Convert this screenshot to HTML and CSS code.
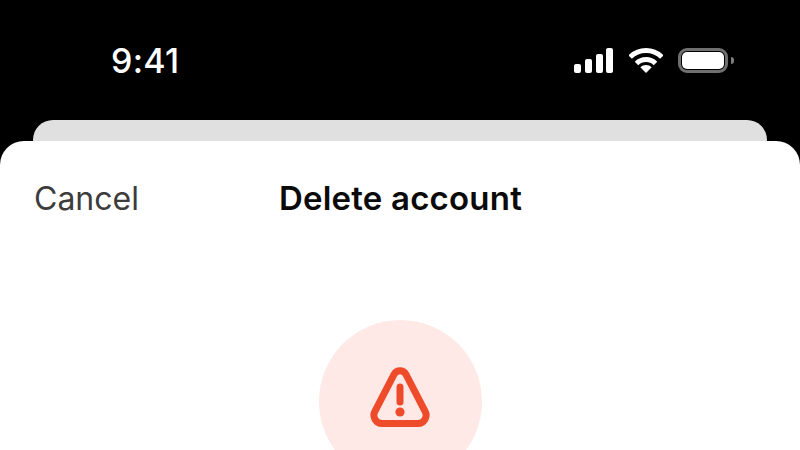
FILE: index.html
```html
<!DOCTYPE html>
<html lang="en">
<head>
  <meta charset="UTF-8" />
  <title>Delete account</title>
  <link rel="stylesheet" href="styles.css">
</head>
<body>
  <div class="status">
    <div class="clock">9:41</div>
    <div class="status-icons">
      <svg class="signal" width="40" height="25" viewBox="0 0 40 25" fill="#fff">
        <rect x="0" y="16" width="7" height="9" rx="2" />
        <rect x="11" y="11" width="7" height="14" rx="2" />
        <rect x="22" y="6" width="7" height="19" rx="2" />
        <rect x="32" y="0" width="7" height="25" rx="2" />
      </svg>
      <svg class="wifi" width="34" height="25" viewBox="0 0 34 25" fill="none" stroke="#fff" stroke-width="5">
        <path d="M1.1 9.1A22.5 22.5 0 0 1 32.9 9.1" />
        <path d="M7.5 15.5A13.5 13.5 0 0 1 26.5 15.5" />
        <path d="M17 25L11.3 19.3A8 8 0 0 1 22.7 19.3Z" fill="#fff" stroke="none" />
      </svg>
      <div class="battery">
        <div class="battery-body"><div class="battery-fill"></div></div>
        <div class="battery-nub"></div>
      </div>
    </div>
  </div>

  <div class="back-card"></div>

  <div class="sheet">
    <div class="nav">
      <div class="cancel">Cancel</div>
      <div class="title">Delete account</div>
    </div>
    <div class="warn-circle">
      <svg width="60" height="60" viewBox="0 0 60 60" fill="none" stroke="#ee4b2b" stroke-width="7" stroke-linecap="round">
        <path d="M24.3 6.9A6.6 6.6 0 0 1 35.7 6.9L55.1 44.4A8.25 8.25 0 0 1 48 56.5H12A8.25 8.25 0 0 1 4.9 44.4Z" stroke-linejoin="round" />
        <path d="M30 20V35" />
        <circle cx="30" cy="45" r="4.6" fill="#ee4b2b" stroke="none" />
      </svg>
    </div>
  </div>
</body>
</html>
```

FILE: styles.css
```css
html, body {
  margin: 0;
  height: 450px;
  overflow: hidden;
  background: #000;
  font-family: 'Inter', 'Liberation Sans', sans-serif;
}
.status {
  height: 120px;
  box-sizing: border-box;
  padding: 0 66px 0 111px;
  display: flex;
  align-items: center;
  justify-content: space-between;
  color: #fff;
}
.clock {
  font-size: 34px;
  font-weight: 500;
  letter-spacing: 0.3px;
}
.status-icons {
  display: flex;
  align-items: center;
  gap: 15px;
}
.signal, .wifi {
  display: block;
}
.battery {
  display: flex;
  align-items: center;
  gap: 3px;
}
.battery-body {
  width: 50px;
  height: 25px;
  box-sizing: border-box;
  border: 3px solid #6f6f6f;
  border-radius: 9px;
  padding: 1px;
}
.battery-fill {
  height: 100%;
  background: #fff;
  border-radius: 5px;
}
.battery-nub {
  width: 3px;
  height: 7px;
  background: #7c7c7c;
  border-radius: 0 3px 3px 0;
}
.back-card {
  height: 21px;
  margin: 0 33px;
  background: #e0e0e0;
  border-radius: 20px 20px 0 0;
}
.sheet {
  height: 309px;
  overflow: hidden;
  background: #fff;
  border-radius: 24px 24px 0 0;
}
.nav {
  height: 114px;
  padding-left: 34px;
  display: grid;
  grid-template-columns: 245px auto;
  align-items: center;
}
.cancel {
  font-size: 32px;
  color: #3c3c3c;
}
.title {
  font-size: 33px;
  font-weight: 600;
  letter-spacing: 0.2px;
  color: #0a0a0a;
}
.warn-circle {
  width: 163px;
  height: 163px;
  box-sizing: border-box;
  padding-bottom: 10px;
  margin: 65px auto 0;
  border-radius: 50%;
  background: #fee9e7;
  display: flex;
  align-items: center;
  justify-content: center;
}
```
